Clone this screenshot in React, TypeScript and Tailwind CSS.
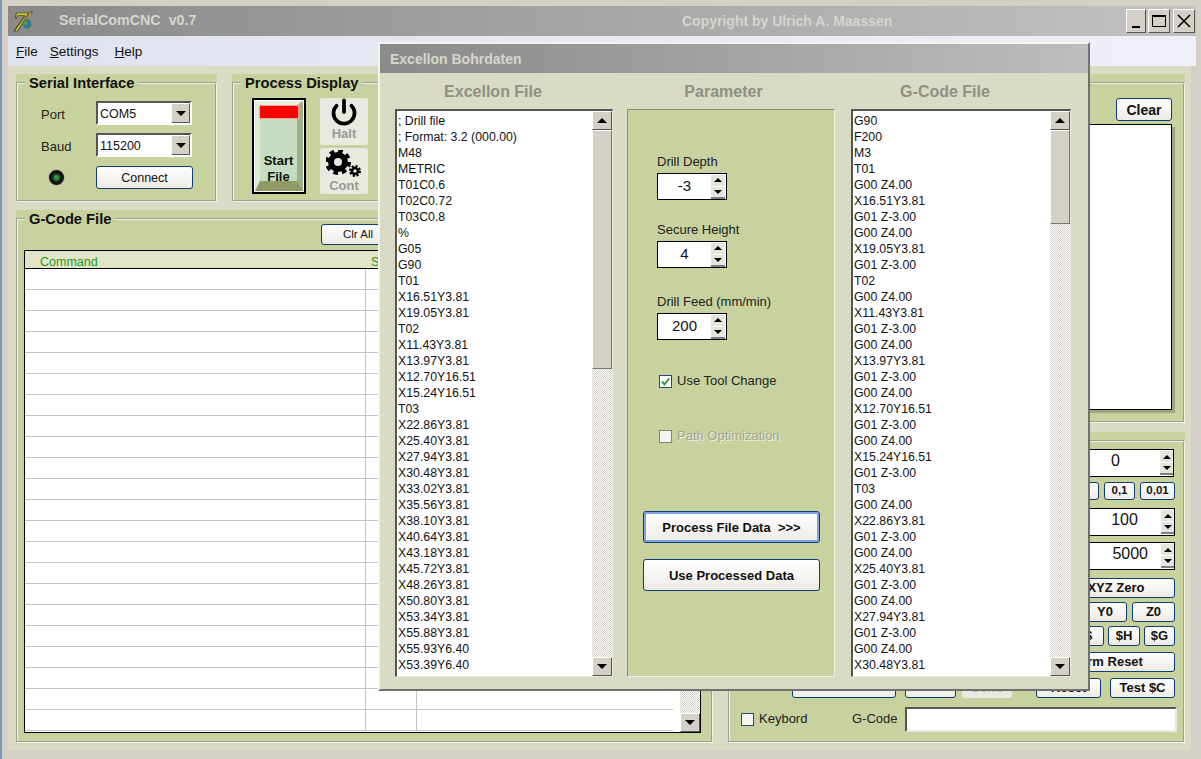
import { ReactNode } from 'react';
import { Power } from 'lucide-react';

const excellonLines = [
    '; Drill file', '; Format: 3.2 (000.00)', 'M48', 'METRIC', 'T01C0.6', 'T02C0.72', 'T03C0.8', '%', 'G05', 'G90', 'T01',
    'X16.51Y3.81', 'X19.05Y3.81', 'T02', 'X11.43Y3.81', 'X13.97Y3.81', 'X12.70Y16.51', 'X15.24Y16.51', 'T03',
    'X22.86Y3.81', 'X25.40Y3.81', 'X27.94Y3.81', 'X30.48Y3.81', 'X33.02Y3.81', 'X35.56Y3.81', 'X38.10Y3.81',
    'X40.64Y3.81', 'X43.18Y3.81', 'X45.72Y3.81', 'X48.26Y3.81', 'X50.80Y3.81', 'X53.34Y3.81', 'X55.88Y3.81',
    'X55.93Y6.40', 'X53.39Y6.40',
];

const gcodeLines = [
    'G90', 'F200', 'M3', 'T01', 'G00 Z4.00', 'X16.51Y3.81', 'G01 Z-3.00', 'G00 Z4.00', 'X19.05Y3.81', 'G01 Z-3.00',
    'T02', 'G00 Z4.00', 'X11.43Y3.81', 'G01 Z-3.00', 'G00 Z4.00', 'X13.97Y3.81', 'G01 Z-3.00', 'G00 Z4.00',
    'X12.70Y16.51', 'G01 Z-3.00', 'G00 Z4.00', 'X15.24Y16.51', 'G01 Z-3.00', 'T03', 'G00 Z4.00', 'X22.86Y3.81',
    'G01 Z-3.00', 'G00 Z4.00', 'X25.40Y3.81', 'G01 Z-3.00', 'G00 Z4.00', 'X27.94Y3.81', 'G01 Z-3.00', 'G00 Z4.00',
    'X30.48Y3.81',
];

function Arrow({ down = false, small = false }: { down?: boolean; small?: boolean }) {
    const w = small ? 8 : 10;
    const h = small ? 4 : 5;
    return (
        <svg width={w} height={h} viewBox="0 0 10 5">
            <polygon points={down ? '0,0 10,0 5,5' : '0,5 10,5 5,0'} fill="#000" />
        </svg>
    );
}

function ScrollButton({ down = false }: { down?: boolean }) {
    return (
        <div className="h-[19px] shrink-0 flex items-center justify-center bg-[#d4d0c8] border border-t-white border-l-white border-r-[#555] border-b-[#555]">
            <Arrow down={down} />
        </div>
    );
}

function ScrollBar({ thumb }: { thumb?: string }) {
    return (
        <div className="w-5 shrink-0 flex flex-col bg-[conic-gradient(#d4d0c8_25%,#fff_0_50%,#d4d0c8_0_75%,#fff_0)] bg-[length:2px_2px]">
            <ScrollButton />
            {thumb && <div className={`${thumb} shrink-0 bg-[#d4d0c8] border border-t-white border-l-white border-r-[#777] border-b-[#777]`} />}
            <div className="flex-1" />
            <ScrollButton down />
        </div>
    );
}

function Panel({ title, className, children }: { title?: string; className: string; children: ReactNode }) {
    return (
        <div className={`${className} bg-[#c8d29f]`}>
            <fieldset className="h-full min-w-0 border-2 [border-style:groove] border-[#f1f2e6]">
                <legend className="ml-[7px] px-1 h-[17px] text-[14.7px] leading-[19px] font-bold text-[#111]">
                    {title}
                </legend>
                {children}
            </fieldset>
        </div>
    );
}

function AquaButton({ className, children }: { className: string; children?: ReactNode }) {
    return (
        <button className={`${className} shrink-0 rounded-[3px] border border-[#0b3f73] bg-gradient-to-b from-white to-[#eeebe5] font-bold text-[#111] flex items-center justify-center`}>
            {children}
        </button>
    );
}

function ComboBox({ value }: { value: string }) {
    return (
        <div className="w-24 h-6 flex items-center bg-white border-2 border-t-[#555] border-l-[#555] border-r-white border-b-white text-[12.5px] text-[#111]">
            <span className="flex-1 pl-0.5 pt-0.5">{value}</span>
            <span className="w-[19px] h-5 flex items-center justify-center bg-[#d4d0c8] border border-t-white border-l-white border-r-[#555] border-b-[#555]">
                <Arrow down />
            </span>
        </div>
    );
}

function SpinField({ value, className, textClass, spinClass }: { value: string; className: string; textClass: string; spinClass: string }) {
    return (
        <div className={`${className} shrink-0 flex bg-white border border-black`}>
            <span className={`${textClass} flex-1 self-center text-[#111]`}>{value}</span>
            <span className={`${spinClass} flex flex-col self-center`}>
                <span className="h-3 flex items-center justify-center bg-[#e6e4dd] border-b border-[#fff]">
                    <Arrow small />
                </span>
                <span className="h-3 flex items-center justify-center bg-[#e6e4dd] border-b-2 border-[#808080]">
                    <Arrow small down />
                </span>
            </span>
        </div>
    );
}

function Gears() {
    return (
        <svg width="36" height="28" viewBox="0 0 36 28">
            <circle cx="12" cy="12" r="7" fill="none" stroke="#000" strokeWidth="6" />
            <circle cx="12" cy="12" r="11" fill="none" stroke="#000" strokeWidth="4" strokeDasharray="4.6 4" />
            <circle cx="29" cy="21" r="3" fill="none" stroke="#000" strokeWidth="2.6" />
            <circle cx="29" cy="21" r="5" fill="none" stroke="#000" strokeWidth="2" strokeDasharray="2.2 1.7" />
        </svg>
    );
}

function Logo() {
    return (
        <svg width="24" height="26" viewBox="0 0 24 26" className="shrink-0 overflow-visible">
            <text x="0" y="23" fontFamily="'Liberation Serif', serif" fontWeight="700" fontStyle="italic" fontSize="28" fill="#d6c431" stroke="#2a2a10" strokeWidth="0.7">7</text>
            <circle cx="14" cy="16" r="4.5" fill="#2f7f8f" />
            <circle cx="12.5" cy="15" r="2" fill="#5f9a4a" />
            <text x="15" y="10" fontFamily="'Liberation Serif', serif" fontWeight="700" fontStyle="italic" fontSize="11" fill="#d6c431" stroke="#2a2a10" strokeWidth="0.3">f</text>
        </svg>
    );
}

function ListBox({ lines, className, thumb }: { lines: string[]; className: string; thumb: string }) {
    return (
        <div className={`${className} h-[568px] shrink-0 flex bg-white border-t-2 border-l-2 border-r border-b border-t-[#555] border-l-[#555] border-r-[#e8e8e0] border-b-[#e8e8e0]`}>
            <div className="flex-1 overflow-hidden pt-0.5 pl-px text-[12.3px] leading-4 text-[#111]">
                {lines.map((line, index) => (
                    <div key={index} className="whitespace-pre">{line}</div>
                ))}
            </div>
            <ScrollBar thumb={thumb} />
        </div>
    );
}

function Dialog() {
    return (
        <div className="absolute left-[376px] top-[42px] w-[712px] h-[649px] flex flex-col bg-[#d9dbc5] border-2 border-t-[#f4f4ee] border-l-[#f4f4ee] border-r-[#707070] border-b-[#707070]">
            <div className="h-[29px] shrink-0 flex items-center pl-2.5 pt-0.5 bg-gradient-to-r from-[#8a8a8a] to-[#bdbdbd] text-[14px] font-bold text-[#d6d6cc]">
                Excellon Bohrdaten
            </div>
            <div className="flex pl-[15px] pt-[36px] gap-[14px] relative">
                {/* Excellon file */}
                <div className="flex flex-col w-[218px]">
                    <h3 className="h-9 -mt-9 pt-0.5 pr-[22px] flex items-center justify-center text-base font-bold text-[#8f9082]">Excellon File</h3>
                    <ListBox lines={excellonLines} className="w-[218px]" thumb="h-[239px]" />
                </div>

                {/* Parameter */}
                <div className="flex flex-col w-[208px]">
                    <h3 className="h-9 -mt-9 pt-0.5 pr-[15px] flex items-center justify-center text-base font-bold text-[#8f9082]">Parameter</h3>
                    <div className="h-[568px] flex flex-col pl-[29px] pt-[44px] bg-[#c8d29f] border border-t-[#8b8c7c] border-l-[#8b8c7c] border-r-[#f0f0e6] border-b-[#f0f0e6] text-[13px] text-[#222]">
                        <label className="h-4 leading-4">Drill Depth</label>
                        <SpinField value="-3" className="mt-[3px] w-[70px] h-[27px]" textClass="text-center text-[15px]" spinClass="mr-px w-[14px]" />
                        <label className="h-4 leading-4 mt-[22px]">Secure Height</label>
                        <SpinField value="4" className="mt-[3px] w-[70px] h-[27px]" textClass="text-center text-[15px]" spinClass="mr-px w-[14px]" />
                        <label className="h-4 leading-4 mt-[26px]">Drill Feed (mm/min)</label>
                        <SpinField value="200" className="mt-[3px] w-[70px] h-[27px]" textClass="text-center text-[15px]" spinClass="mr-px w-[14px]" />
                        <div className="mt-[33px] h-4 flex items-center gap-[5px] pl-0.5">
                            <span className="w-[13px] h-[13px] flex items-center justify-center bg-white border border-[#1f4f80]">
                                <svg width="11" height="11" viewBox="0 0 11 11">
                                    <path d="M2 5.5 L4.5 8.5 L9 2.5" fill="none" stroke="#2f9a4a" strokeWidth="2" />
                                </svg>
                            </span>
                            Use Tool Change
                        </div>
                        <div className="mt-[39px] h-4 flex items-center gap-[5px] pl-0.5 text-[#a3a593] [text-shadow:1px_1px_0_#eef0e2]">
                            <span className="w-[13px] h-[13px] bg-[#f4f4ee] border border-[#7f8575]" />
                            Path Optimization
                        </div>
                        <AquaButton className="-ml-[14px] mt-[67px] w-[177px] h-8 pt-0.5 text-[13px] shadow-[inset_0_0_0_2px_#7f9fe6]">
                            Process File Data&nbsp;&nbsp;&gt;&gt;&gt;
                        </AquaButton>
                        <AquaButton className="-ml-[14px] mt-4 w-[177px] h-8 pt-0.5 text-[13px]">Use Processed Data</AquaButton>
                    </div>
                </div>

                {/* G-Code output */}
                <div className="flex flex-col w-[220px] ml-0.5">
                    <h3 className="h-9 -mt-9 pt-0.5 pr-8 flex items-center justify-center text-base font-bold text-[#8f9082]">G-Code File</h3>
                    <ListBox lines={gcodeLines} className="w-[220px]" thumb="h-[94px]" />
                </div>
            </div>
        </div>
    );
}

export default function App() {
    return (
        <div className="relative w-[1201px] h-[759px] overflow-hidden bg-[#d4d0c8] border-l-2 border-[#7e96b4] pl-1.5 pt-1.5 font-['Liberation_Sans',Arial,sans-serif]">
            <div className="w-[1188px] h-[744px] flex flex-col">
                {/* Title bar */}
                <div className="h-[30px] shrink-0 flex items-center pl-[5px] bg-gradient-to-r from-[#8a8a8a] via-[#a6a6a6] to-[#c2c2c2] text-[14.3px] font-bold text-[#d6d6cc]">
                    <Logo />
                    <span className="ml-[22px] w-[623px] whitespace-pre">SerialComCNC  v0.7</span>
                    <span className="w-[444px] text-[14px]">Copyright by Ulrich A. Maassen</span>
                    <div className="flex gap-[2px] font-normal text-black">
                        <span className="w-5 h-6 flex items-end justify-center pb-1 bg-[#d4d0c8] border border-t-white border-l-white border-r-[#555] border-b-[#555]">
                            <span className="w-2 h-0.5 bg-black" />
                        </span>
                        <span className="w-[22px] h-6 flex items-center justify-center bg-[#d4d0c8] border border-t-white border-l-white border-r-[#555] border-b-[#555]">
                            <span className="w-3.5 h-3 border border-t-2 border-black" />
                        </span>
                        <span className="w-[22px] h-6 ml-px flex items-center justify-center bg-[#d4d0c8] border border-t-white border-l-white border-r-[#555] border-b-[#555]">
                            <svg width="14" height="14" viewBox="0 0 14 14">
                                <path d="M1 1 L13 13 M13 1 L1 13" stroke="#000" strokeWidth="1.5" />
                            </svg>
                        </span>
                    </div>
                </div>

                {/* Menu */}
                <div className="h-[30px] shrink-0 flex items-center pl-2 pt-0.5 bg-gradient-to-r from-[#dfe3ee] to-[#efeff9] text-[13.5px] text-[#111]">
                    <span><u>F</u>ile</span>
                    <span className="ml-3"><u>S</u>ettings</span>
                    <span className="ml-4"><u>H</u>elp</span>
                </div>

                {/* Main body */}
                <div className="flex-1 mr-[5px] flex gap-[15px] pl-2 pt-[8px] bg-[#d9dbc5]">
                    <div className="w-[697px] flex flex-col gap-2">
                        <div className="flex gap-[15px] h-[128px]">
                            <Panel title="Serial Interface" className="w-[201px] h-[128px]">
                                <div className="grid grid-cols-[55px_97px] gap-x-0 pl-[23px] pt-2.5 text-[13px] text-[#222]">
                                    <span className="h-6 pt-[2px] leading-6">Port</span>
                                    <ComboBox value="COM5" />
                                    <span className="h-6 mt-2 pt-[2px] leading-6">Baud</span>
                                    <div className="mt-2"><ComboBox value="115200" /></div>
                                    <span className="mt-[9px] h-[23px] flex items-center pl-2">
                                        <span className="w-[15px] h-[15px] rounded-full bg-[radial-gradient(#3a9a4a_20%,#0c2a12_70%)] border-[3px] border-[#111] shadow-[0_0_0_1px_#b5b8a0]" />
                                    </span>
                                    <AquaButton className="mt-[9px] w-[97px] h-[23px] pt-0.5 text-[12.5px] !font-normal">Connect</AquaButton>
                                </div>
                            </Panel>
                            <Panel title="Process Display" className="flex-1 h-[128px]">
                                <div className="flex gap-[14px] pl-[18px] pt-[7px]">
                                    <div className="w-[54px] h-[96px] bg-black p-[2px]">
                                        <div className="h-full bg-white p-px">
                                            <div className="h-full flex flex-col items-center bg-[#c6dcc0] border-t-4 border-b-[10px] border-l-[5px] border-r-[6px] border-t-[#e6eee0] border-l-[#dfe9d8] border-r-[#9db08c] border-b-[#8f9a65]">
                                                <div className="w-10 h-[14px] bg-[#f00] border border-[#f6a58f] shrink-0" />
                                                <div className="mt-[34px] text-[13px] leading-4 font-bold text-center text-[#111]">Start<br />File</div>
                                            </div>
                                        </div>
                                    </div>
                                    <div className="flex flex-col gap-[3px]">
                                        <div className="w-12 h-[47px] pb-[3px] flex flex-col items-center justify-end rounded-[2px] bg-[#e8e9e1] text-[13px] leading-4 font-bold text-[#9a9a94]">
                                            <Power size={28} strokeWidth={3.2} className="text-black" />
                                            Halt
                                        </div>
                                        <div className="w-12 h-[46px] flex flex-col items-center justify-end rounded-[2px] bg-[#e8e9e1] text-[13px] leading-4 font-bold text-[#9a9a94]">
                                            <Gears />
                                            Cont
                                        </div>
                                    </div>
                                </div>
                            </Panel>
                        </div>

                        {/* G-Code table */}
                        <Panel title="G-Code File" className="w-[697px] h-[533px]">
                            <div className="pl-[303px] -mt-[3px]">
                                <AquaButton className="w-[74px] h-[21px] text-[11.5px] !font-normal">Clr All</AquaButton>
                            </div>
                            <div className="ml-1.5 mt-[5px] w-[677px] h-[483px] flex flex-col bg-white border border-black">
                                <div className="h-[18px] shrink-0 flex items-center pt-1.5 bg-[#e2e4c6] border-b border-black text-[12.5px] text-[#1f9a1f]">
                                    <span className="w-[346px] pl-[15px]">Command</span>
                                    <span>S</span>
                                </div>
                                <div className="flex-1 min-h-0 flex">
                                    <div className="flex-1 overflow-hidden">
                                        {Array.from({ length: 22 }, (_, index) => (
                                            <div key={index} className="h-[21px] flex border-b border-[#c4c4c4]">
                                                <div className="w-[341px] border-r border-[#c4c4c4]" />
                                                <div className="w-[51px] border-r border-[#c4c4c4]" />
                                            </div>
                                        ))}
                                    </div>
                                    <div className="w-[7px]" />
                                    <ScrollBar />
                                </div>
                            </div>
                        </Panel>
                    </div>

                    <div className="w-[457px] flex flex-col gap-[9px]">
                        {/* Console */}
                        <Panel className="w-[457px] h-[349px]">
                            <div className="flex flex-col items-end pr-[11px] pt-[7px]">
                                <AquaButton className="w-14 h-[23px] text-sm">Clear</AquaButton>
                                <div className="mt-[3px] w-[428px] h-[286px] bg-white border border-black shadow-[3px_3px_0_#9fa67f]" />
                            </div>
                        </Panel>

                        {/* Machine controls */}
                        <Panel className="w-[457px] h-[311px]">
                            <div className="flex flex-col items-end pr-2">
                                <SpinField value="0" className="mr-px w-[104px] h-7" textClass="text-center text-base pb-1" spinClass="w-[13px]" />
                                <div className="mt-[5px] flex gap-[5px] text-[11.5px]">
                                    <AquaButton className="w-10 h-[18px]" />
                                    <AquaButton className="w-[31px] h-[18px]">0,1</AquaButton>
                                    <AquaButton className="w-[35px] h-[18px]">0,01</AquaButton>
                                </div>
                                <SpinField value="100" className="mt-2 w-[88px] h-7" textClass="text-center text-base pb-1" spinClass="w-[13px]" />
                                <SpinField value="5000" className="mt-1.5 w-[88px] h-7" textClass="text-right pr-[13px] text-base pb-1" spinClass="w-[13px]" />
                                <AquaButton className="mt-2 w-[118px] h-5 text-[13px]">XYZ Zero</AquaButton>
                                <div className="mt-1 flex gap-[5px] text-[13px]">
                                    <AquaButton className="w-11 h-5">Y0</AquaButton>
                                    <AquaButton className="w-[43px] h-5">Z0</AquaButton>
                                </div>
                                <div className="mt-1 flex gap-[4px] text-[13px]">
                                    <AquaButton className="w-[31px] h-5">$</AquaButton>
                                    <AquaButton className="w-8 h-5">$H</AquaButton>
                                    <AquaButton className="w-[31px] h-5">$G</AquaButton>
                                </div>
                                <AquaButton className="mt-1.5 w-[140px] h-5 text-[13px]">Alarm Reset</AquaButton>
                                <div className="mt-1.5 flex text-[13px]">
                                    <AquaButton className="w-[104px] h-5" />
                                    <AquaButton className="ml-[9px] w-[51px] h-5" />
                                    <div className="ml-[6px] w-[50px] h-5 flex items-center justify-center rounded-[3px] bg-[#e8e9e1] font-bold text-[#b5b5ae]">Send</div>
                                    <AquaButton className="ml-[24px] w-[65px] h-5">Reset</AquaButton>
                                    <AquaButton className="ml-[9px] w-[65px] h-5">Test $C</AquaButton>
                                </div>
                            </div>
                            <div className="mt-[9px] flex items-center pl-[11px] text-[13px] text-[#222]">
                                <span className="w-[13px] h-[13px] bg-[#f6f6f0] border border-[#1f4f80]" />
                                <span className="ml-[5px] w-[93px] pb-0.5">Keybord</span>
                                <span className="w-[53px] pb-0.5">G-Code</span>
                                <div className="w-[272px] h-[25px] bg-white border-2 border-t-[#555] border-l-[#555] border-r-[#e8e8e0] border-b-[#e8e8e0]" />
                            </div>
                        </Panel>
                    </div>
                </div>
            </div>

            <Dialog />
        </div>
    );
}
